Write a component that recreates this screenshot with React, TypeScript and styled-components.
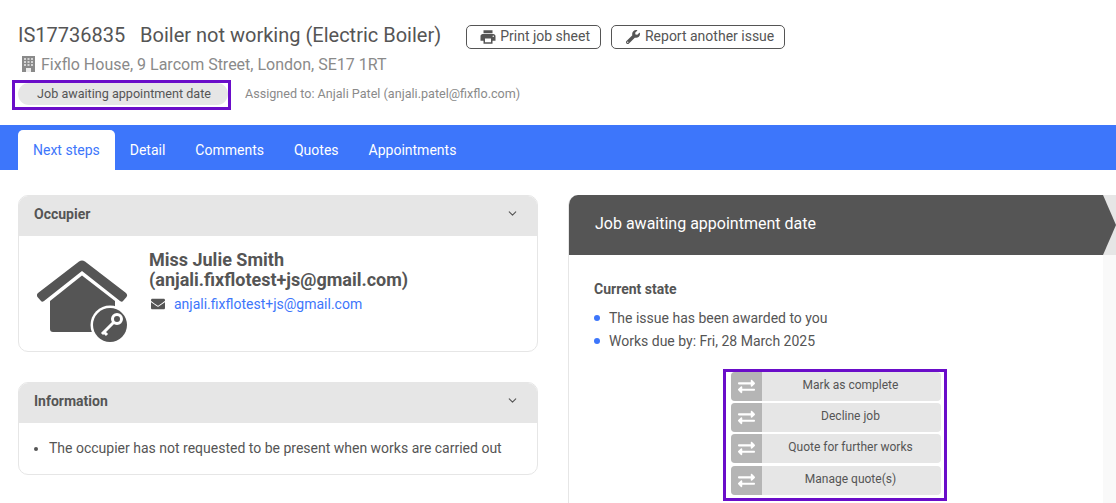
import React from 'react';
import styled, { createGlobalStyle } from 'styled-components';
import { FaEnvelope, FaExchangeAlt, FaWrench } from 'react-icons/fa';
import { MdPrint } from 'react-icons/md';
import { FiChevronDown } from 'react-icons/fi';

const GlobalStyle = createGlobalStyle`
  html, body {
    margin: 0;
    padding: 0;
    background: #fff;
    overflow: hidden;
  }
  body {
    font-family: Roboto, "Liberation Sans", sans-serif;
    font-size: 14px;
    color: #555;
  }
  * { box-sizing: border-box; }
`;

const Page = styled.div`
  width: 1116px;
  height: 503px;
  overflow: hidden;
`;

const Header = styled.header`
  height: 125px;
  padding: 21px 18px 0;
`;

const TitleRow = styled.div`
  display: flex;
  align-items: center;
  height: 29px;
`;

const JobTitle = styled.h1`
  margin: 0;
  font-size: 20px;
  font-weight: 400;
  line-height: 29px;
  color: #555;
  white-space: pre;
`;

const OutlineButton = styled.button<{ $offset: number }>`
  display: inline-flex;
  align-items: center;
  gap: 5px;
  height: 24px;
  margin: 2px 0 0 ${p => p.$offset}px;
  padding: 0 10px 2px 14px;
  border: 1px solid #555;
  border-radius: 5px;
  background: #fff;
  color: #555;
  font: 400 14px Roboto, sans-serif;
`;

const PrintIcon = styled(MdPrint)`
  font-size: 18px;
  margin: 2px -2px 0 -2px;
`;

const WrenchIcon = styled(FaWrench)`
  font-size: 14px;
  margin-top: 2px;
`;

const Address = styled.div`
  display: flex;
  align-items: center;
  gap: 6px;
  height: 24px;
  margin-top: 2px;
  padding-left: 4px;
  font-size: 16px;
  color: #8a8a8a;
`;

const BuildingIcon = styled.svg`
  width: 13px;
  height: 16px;
  flex: none;
`;

const StatusRow = styled.div`
  display: flex;
  align-items: center;
  margin: 4px 0 0 -6px;
`;

const Highlight = styled.div`
  border: 3px solid #6a0dc9;
  background: #fff;
`;

const StatusBox = styled(Highlight)`
  width: 219px;
  height: 30px;
  padding: 0 0 0 3px;
`;

const StatusPill = styled.div`
  width: 210px;
  height: 22px;
  padding-left: 2px;
  border-radius: 11px;
  background: #e6e6e6;
  color: #555;
  font-size: 12.6px;
  line-height: 22px;
  text-align: center;
`;

const Assigned = styled.span`
  margin-left: 14px;
  padding-bottom: 4px;
  font-size: 12.6px;
  color: #8a8a8a;
`;

const TabBar = styled.nav`
  display: flex;
  align-items: flex-end;
  height: 45px;
  padding-left: 18px;
  background: #3d76fb;
`;

const Tab = styled.a<{ $active?: boolean }>`
  height: 40px;
  padding: 0 15px;
  border-radius: 5px 5px 0 0;
  background: ${p => (p.$active ? '#fff' : 'transparent')};
  color: ${p => (p.$active ? '#3d76fb' : '#fff')};
  font-size: 14px;
  line-height: 40px;
`;

const Content = styled.main`
  display: grid;
  grid-template-columns: 520px 548px;
  column-gap: 30px;
  padding: 25px 0 0 18px;
`;

const LeftColumn = styled.div`
  display: flex;
  flex-direction: column;
  gap: 30px;
`;

const Card = styled.section`
  border: 1px solid #e6e6e6;
  border-radius: 10px;
  overflow: hidden;
`;

const CardHeader = styled.div`
  display: flex;
  align-items: center;
  justify-content: space-between;
  height: 40px;
  padding: 0 18px 5px 15px;
  background: #e6e6e6;
  font-weight: 700;
  color: #555;
  svg { font-size: 13px; }
`;

const OccupierBody = styled.div`
  display: flex;
  height: 115px;
  padding: 14px 0 0 18px;
`;

const HouseIcon = styled.svg`
  width: 92px;
  height: 84px;
  margin-top: 10px;
  flex: none;
`;

const OccupierText = styled.div`
  margin-left: 20px;
`;

const OccupierName = styled.div`
  font-size: 18px;
  font-weight: 700;
  line-height: 20px;
  color: #555;
`;

const EmailRow = styled.div`
  display: flex;
  align-items: center;
  gap: 9px;
  margin-top: 4px;
  padding-left: 2px;
  line-height: 20px;
  color: #3d76fb;
  svg { font-size: 14px; color: #555; }
`;

const InfoList = styled.ul`
  margin: 0;
  padding: 15px 0 16px 30px;
  line-height: 20px;
  li::marker { color: #555; }
`;

const StepPanel = styled.section`
  position: relative;
  height: 320px;
  border-left: 1px solid #e6e6e6;
  border-top-left-radius: 10px;
  overflow: hidden;
`;

const StepHeader = styled.div`
  height: 60px;
  background: #e6e6e6;
`;

const StepHeaderArrow = styled.div`
  height: 60px;
  padding-left: 26px;
  background: #555;
  clip-path: polygon(0 0, 534px 0, 100% 50%, 534px 100%, 0 100%);
  color: #fff;
  font-size: 16px;
  line-height: 58px;
`;

const StepBody = styled.div`
  display: grid;
  grid-template-columns: 534px 1fr;
  height: 260px;
`;

const StepMain = styled.div`
  padding: 24px 0 0 25px;
`;

const StepSide = styled.div`
  background: #f9f9f9;
`;

const SectionTitle = styled.div`
  font-weight: 700;
  line-height: 20px;
  color: #555;
`;

const StateList = styled.ul`
  margin: 7px 0 0;
  padding: 0;
  list-style: none;
`;

const StateItem = styled.li`
  display: flex;
  align-items: center;
  height: 23px;
  &::before {
    content: '';
    width: 6px;
    height: 6px;
    margin-right: 9px;
    border-radius: 50%;
    background: #3d76fb;
  }
`;

const ActionBox = styled(Highlight)`
  width: 224px;
  height: 132px;
  margin: 17px 0 0 129px;
  padding: 0 3px 0 5px;
`;

const ActionButton = styled.button`
  display: flex;
  align-items: stretch;
  width: 210px;
  height: 29px;
  margin-top: 2px;
  padding: 0;
  border: 0;
  border-radius: 4px;
  overflow: hidden;
  background: #e6e6e6;
  color: #555;
  font: 400 12px Roboto, sans-serif;
  &:first-child { margin-top: 0; }
  &:last-child { margin-top: 3px; }
`;

const ActionIcon = styled.span`
  display: flex;
  align-items: center;
  justify-content: center;
  flex: none;
  width: 31px;
  background: #b5b5b5;
  color: #fff;
  font-size: 17px;
`;

const ActionLabel = styled.span`
  flex: 1;
  padding-right: 2px;
  line-height: 27px;
  text-align: center;
`;

const tabs = ['Next steps', 'Detail', 'Comments', 'Quotes', 'Appointments'];
const actions = ['Mark as complete', 'Decline job', 'Quote for further works', 'Manage quote(s)'];

const windowRows = [2, 5, 8];
const windowCols = [2, 5.5, 9];

const App: React.FC = () => (
  <Page>
    <GlobalStyle />
    <Header>
      <TitleRow>
        <JobTitle>IS17736835   Boiler not working (Electric Boiler)</JobTitle>
        <OutlineButton $offset={25}><PrintIcon /> Print job sheet</OutlineButton>
        <OutlineButton $offset={10}><WrenchIcon /> Report another issue</OutlineButton>
      </TitleRow>
      <Address>
        <BuildingIcon viewBox="0 0 13 16">
          <rect width="13" height="16" fill="#8a8a8a" />
          {windowRows.map(y =>
            windowCols.map(x => <rect key={`${x}-${y}`} x={x} y={y} width="2" height="2" fill="#d4d4d4" />)
          )}
          <rect x="4" y="12" width="5" height="4" fill="#eee" />
        </BuildingIcon>
        Fixflo House, 9 Larcom Street, London, SE17 1RT
      </Address>
      <StatusRow>
        <StatusBox><StatusPill>Job awaiting appointment date</StatusPill></StatusBox>
        <Assigned>Assigned to: Anjali Patel (anjali.patel@fixflo.com)</Assigned>
      </StatusRow>
    </Header>

    <TabBar>
      {tabs.map((tab, i) => <Tab key={tab} $active={i === 0}>{tab}</Tab>)}
    </TabBar>

    <Content>
      <LeftColumn>
        <Card>
          <CardHeader>Occupier <FiChevronDown /></CardHeader>
          <OccupierBody>
            <HouseIcon viewBox="0 0 92 84">
              <path d="M42 1.5 Q45 -0.5 48 1.5 L89 33 Q91 35 89.5 37 L86 41 Q85 42.5 83 41 L45 11 L7 41 Q5 42.5 4 41 L0.5 37 Q-1 35 1 33 Z" fill="#555" />
              <path d="M45 15.5 L13 41 V69 Q13 72 16 72 H78 V41 Z" fill="#555" />
              <circle cx="73" cy="65" r="19.5" fill="#fff" />
              <circle cx="73" cy="65" r="17" fill="#555" />
              <circle cx="80" cy="59" r="4.5" fill="none" stroke="#fff" strokeWidth="3" />
              <path d="M76.5 62.5 L65 74 M67 72 L70 75" stroke="#fff" strokeWidth="3" fill="none" />
            </HouseIcon>
            <OccupierText>
              <OccupierName>Miss Julie Smith<br />(anjali.fixflotest+js@gmail.com)</OccupierName>
              <EmailRow><FaEnvelope /> anjali.fixflotest+js@gmail.com</EmailRow>
            </OccupierText>
          </OccupierBody>
        </Card>
        <Card>
          <CardHeader>Information <FiChevronDown /></CardHeader>
          <InfoList>
            <li>The occupier has not requested to be present when works are carried out</li>
          </InfoList>
        </Card>
      </LeftColumn>

      <StepPanel>
        <StepHeader>
          <StepHeaderArrow>Job awaiting appointment date</StepHeaderArrow>
        </StepHeader>
        <StepBody>
          <StepMain>
            <SectionTitle>Current state</SectionTitle>
            <StateList>
              <StateItem>The issue has been awarded to you</StateItem>
              <StateItem>Works due by: Fri, 28 March 2025</StateItem>
            </StateList>
            <ActionBox>
              {actions.map(action => (
                <ActionButton key={action}>
                  <ActionIcon><FaExchangeAlt /></ActionIcon>
                  <ActionLabel>{action}</ActionLabel>
                </ActionButton>
              ))}
            </ActionBox>
          </StepMain>
          <StepSide />
        </StepBody>
      </StepPanel>
    </Content>
  </Page>
);

export default App;
